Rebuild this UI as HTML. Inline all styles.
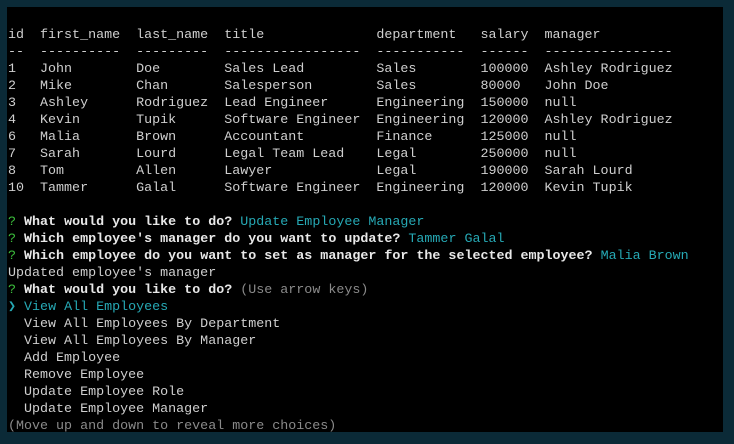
<!DOCTYPE html>
<html><head><meta charset="utf-8"><style>
html,body{margin:0;padding:0;}
body{width:734px;height:444px;background:#0b2a37;position:relative;overflow:hidden;}
#t{position:absolute;left:7px;top:7px;width:716px;height:425px;background:#000;}
pre{position:absolute;left:1px;top:20px;margin:0;font-family:"Liberation Mono",monospace;font-size:13.35px;line-height:17px;color:#cfcfcf;white-space:pre;}
.g{color:#3cbf3c}.c{color:#26a9b5}.b{font-weight:bold;color:#e8e8e8}.d{color:#8a8a8a}
</style></head><body><div id="t"><pre>id  first_name  last_name  title              department   salary  manager
--  ----------  ---------  -----------------  -----------  ------  ----------------
1   John        Doe        Sales Lead         Sales        100000  Ashley Rodriguez
2   Mike        Chan       Salesperson        Sales        80000   John Doe
3   Ashley      Rodriguez  Lead Engineer      Engineering  150000  null
4   Kevin       Tupik      Software Engineer  Engineering  120000  Ashley Rodriguez
6   Malia       Brown      Accountant         Finance      125000  null
7   Sarah       Lourd      Legal Team Lead    Legal        250000  null
8   Tom         Allen      Lawyer             Legal        190000  Sarah Lourd
10  Tammer      Galal      Software Engineer  Engineering  120000  Kevin Tupik

<span class="g">?</span> <span class="b">What would you like to do?</span> <span class="c">Update Employee Manager</span>
<span class="g">?</span> <span class="b">Which employee's manager do you want to update?</span> <span class="c">Tammer Galal</span>
<span class="g">?</span> <span class="b">Which employee do you want to set as manager for the selected employee?</span> <span class="c">Malia Brown</span>
Updated employee's manager
<span class="g">?</span> <span class="b">What would you like to do?</span> <span class="d">(Use arrow keys)</span>
<span class="c">❯ View All Employees</span>
  View All Employees By Department
  View All Employees By Manager
  Add Employee
  Remove Employee
  Update Employee Role
  Update Employee Manager
<span class="d">(Move up and down to reveal more choices)</span></pre></div></body></html>
